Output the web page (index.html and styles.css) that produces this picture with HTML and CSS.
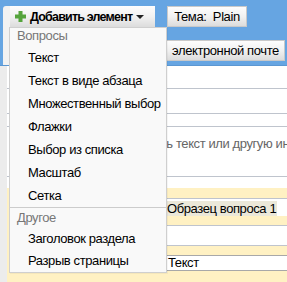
FILE: index.html
```html
<!DOCTYPE html>
<html lang="ru">
<head>
    <meta charset="UTF-8">
    <title>Редактор формы</title>
    <link rel="stylesheet" href="styles.css">
</head>
<body>
    <div class="page">
        <div class="header">
            <div class="side-panel">
                <button class="btn add-btn">
                    <svg class="plus-icon" width="11" height="11" viewBox="0 0 11 11">
                        <path d="M3.5 0h4v3.5H11v4H7.5V11h-4V7.5H0v-4h3.5z" fill="#55a43c"/>
                    </svg>
                    <span>Добавить элемент</span>
                    <span class="caret"></span>
                </button>

                <div class="add-menu">
                    <div class="menu-group">
                        <div class="menu-heading">Вопросы</div>
                        <div class="menu-item">Текст</div>
                        <div class="menu-item">Текст в виде абзаца</div>
                        <div class="menu-item">Множественный выбор</div>
                        <div class="menu-item">Флажки</div>
                        <div class="menu-item">Выбор из списка</div>
                        <div class="menu-item">Масштаб</div>
                        <div class="menu-item">Сетка</div>
                    </div>
                    <div class="menu-group menu-group-last">
                        <div class="menu-heading">Другое</div>
                        <div class="menu-item">Заголовок раздела</div>
                        <div class="menu-item">Разрыв страницы</div>
                    </div>
                </div>
            </div>

            <div class="header-actions">
                <button class="btn theme-btn">Тема:&nbsp; Plain</button>
                <button class="btn email-btn">электронной почте</button>
            </div>
        </div>

        <div class="content">
            <div class="left-strip"></div>
            <div class="main">
                <div class="form-head">
                    <div class="title-box"></div>
                    <div class="subtitle-box"></div>
                    <div class="desc-box">Вы можете добавить текст или другую информацию</div>
                </div>

                <div class="question">
                    <div class="q-row">
                        <div class="q-label"></div>
                        <div class="q-input q-title">
                            <span class="selected-text">Образец вопроса 1</span>
                        </div>
                    </div>
                    <div class="q-row">
                        <div class="q-label"></div>
                        <div class="q-input q-help"></div>
                    </div>
                    <div class="q-row">
                        <div class="q-label"></div>
                        <div class="q-select">Текст</div>
                    </div>
                </div>
            </div>
        </div>
    </div>
</body>
</html>
```

FILE: styles.css
```css
body {
    margin: 0;
    font-family: "Liberation Sans", Arial, sans-serif;
    font-size: 13px;
    letter-spacing: -0.4px;
    color: #000;
    background: #ececec;
}

.page {
    width: 287px;
    height: 282px;
    overflow: hidden;
}

/* blue top bar */
.header {
    display: flex;
    height: 65px;
    background: #66a5e2;
    border-bottom: 1px solid #5b97d2;
}

.side-panel {
    position: relative;
    margin: 6px 0 0 3px;
    padding-left: 7px;
    width: 145px;
    background: #f2f2f2;
    border-top-left-radius: 3px;
}

.btn {
    font-family: inherit;
    font-size: 13px;
    letter-spacing: -0.4px;
    color: #000;
    background: linear-gradient(#fdfdfd 0%, #f1f1f1 50%, #dcdcdc 100%);
    border: 1px solid #c9c9c9;
    padding: 0 7px;
    height: 21px;
    margin: 0;
    cursor: pointer;
    white-space: nowrap;
}

.add-btn {
    display: flex;
    align-items: center;
    width: 145px;
    padding: 0 0 0 5px;
    border: none;
    font-weight: bold;
    font-size: 12.5px;
    letter-spacing: -0.8px;
}

.plus-icon {
    flex: none;
    margin-right: 4px;
}

.caret {
    flex: none;
    margin-left: 4px;
    border-left: 4px solid transparent;
    border-right: 4px solid transparent;
    border-top: 4px solid #222;
}

/* dropdown */
.add-menu {
    position: absolute;
    top: 21px;
    left: 6px;
    width: 156px;
    background: #f9f9f9;
    border: 1px solid #cfcfcf;
    box-shadow: 1px 1px 0 rgba(0, 0, 0, 0.04);
    z-index: 10;
}

.menu-group + .menu-group {
    border-top: 1px solid #cccccc;
}

.menu-heading {
    height: 18px;
    line-height: 16px;
    padding: 0 7px;
    color: #777;
}

.menu-item {
    height: 23px;
    line-height: 23px;
    padding-left: 18px;
    white-space: nowrap;
}

.menu-group-last .menu-heading {
    height: 20px;
    line-height: 20px;
}

.menu-group-last .menu-item {
    height: 22px;
    line-height: 22px;
}

.header-actions {
    display: flex;
    flex-direction: column;
    align-items: flex-end;
    gap: 13px;
    flex: 1;
    padding: 6px 2px 0 0;
    min-width: 0;
}

.theme-btn {
    align-self: flex-start;
    margin-left: 12px;
    width: 80px;
    padding: 0;
}

.email-btn {
    height: 21px;
    width: 119px;
    padding: 0 0 0 5px;
    text-align: left;
}

/* page body */
.content {
    display: flex;
    height: 216px;
}

.left-strip {
    width: 7px;
    flex: none;
    background: #ececec;
}

.main {
    flex: 1;
    background: #fff;
    min-width: 0;
}

.title-box {
    height: 22px;
    border-bottom: 1px solid #bfc4cd;
}

.subtitle-box {
    margin-top: 24px;
    height: 12px;
    border-top: 1px solid #bfc4cd;
    border-bottom: 1px solid #bfc4cd;
}

.desc-box {
    height: 40px;
    padding: 9px 0 0 47px;
    color: #666;
    white-space: nowrap;
    border-bottom: 1px solid #bfc4cd;
}

.question {
    margin-top: 11px;
    padding: 10px 0 12px 9px;
    background: #fff1c3;
    display: flex;
    flex-direction: column;
    gap: 9px;
}

.q-row {
    display: grid;
    grid-template-columns: 150px 1fr;
}

.q-input {
    background: #fff;
    border-top: 1px solid #bfc4cd;
}

.q-title {
    height: 18px;
    padding: 2px 0 0 0;
    box-sizing: border-box;
}

.selected-text {
    display: inline-block;
    height: 15px;
    line-height: 15px;
    padding: 0 1px;
    background: #ebe8d9;
}

.q-help {
    height: 19px;
    border-bottom: 1px solid #bfc4cd;
}

.q-select {
    margin-left: -3px;
    height: 14px;
    line-height: 14px;
    padding-left: 4px;
    background: #fff;
    border: 1px solid #a8a8a8;
    border-right: none;
}
```
